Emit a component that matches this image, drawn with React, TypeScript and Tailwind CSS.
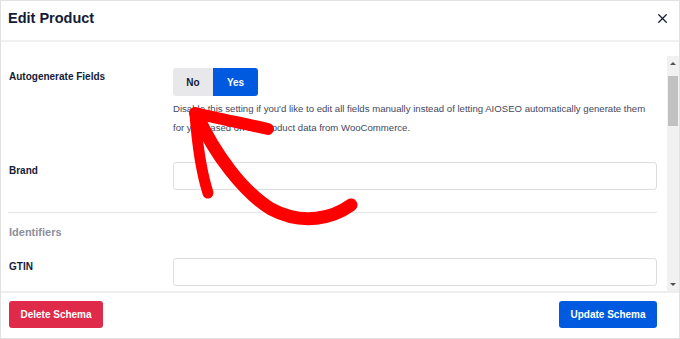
import { X } from "lucide-react";

function Field({ label, children }: { label: string; children: React.ReactNode }) {
  return (
    <div className="flex">
      <div className="w-[164px] shrink-0 pt-[1px] text-[10px] font-bold text-[#141b38]">{label}</div>
      <div className="flex-1">{children}</div>
    </div>
  );
}

function Scrollbar() {
  return (
    <div className="mt-[14px] flex w-[12px] flex-col bg-[#f1f1f1]">
      <div className="flex h-[14px] items-center justify-center">
        <div className="h-0 w-0 border-x-[3px] border-b-[3px] border-x-transparent border-b-[#505050]" />
      </div>
      <div className="mx-[1px] mt-[6px] h-[50px] bg-[#c1c1c1]" />
      <div className="flex-1" />
      <div className="flex h-[14px] items-center justify-center">
        <div className="h-0 w-0 border-x-[3px] border-t-[3px] border-x-transparent border-t-[#505050]" />
      </div>
    </div>
  );
}

export default function App() {
  return (
    <div
      className="relative flex h-[339px] w-[680px] flex-col overflow-hidden border border-[#e2e2e2] bg-white"
      style={{ fontFamily: '"Liberation Sans", Arial, sans-serif' }}
    >
      <div className="flex h-[41px] shrink-0 items-center justify-between border-b-2 border-[#f0f0f0] pb-[4px] pl-[7px] pr-[9px]">
        <h1 className="text-[14.5px] font-bold text-[#141b38]">Edit Product</h1>
        <X className="h-[15px] w-[15px] text-[#141b38]" strokeWidth={2} />
      </div>

      <div className="flex h-[251px] shrink-0 border-b-2 border-[#eeeeee]">
        <div className="flex-1 overflow-hidden pl-[8px] pr-[10px] pt-[26px]">
          <Field label="Autogenerate Fields">
            <div className="flex h-[28px] w-[85px] overflow-hidden rounded-[3px] text-[10px] font-bold">
              <div className="flex w-[40px] items-center justify-center bg-[#e8e8eb] text-[#141b38]">No</div>
              <div className="flex flex-1 items-center justify-center bg-[#005ae0] text-white">Yes</div>
            </div>
            <p className="mt-[3px] text-[9.6px] leading-[19px] text-[#434960]">
              Disable this setting if you'd like to edit all fields manually instead of letting AIOSEO automatically generate them
              <br />
              for you based on the product data from WooCommerce.
            </p>
          </Field>

          <div className="mt-[25px]">
            <Field label="Brand">
              <div className="h-[28px] rounded-[3px] border border-[#dcdde1] bg-white" />
            </Field>
          </div>

          <div className="ml-[-1px] mt-[22px] border-t border-[#e5e6ea]" />

          <div className="mt-[11px] text-[11px] font-bold text-[#8c8f9a]">Identifiers</div>

          <div className="mt-[17px]">
            <Field label="GTIN">
              <div className="h-[28px] rounded-[3px] border border-[#dcdde1] bg-white" />
            </Field>
          </div>
        </div>
        <Scrollbar />
      </div>

      <div className="flex flex-1 items-start justify-between pl-[8px] pr-[22px] pt-[8px]">
        <button className="h-[27px] w-[94px] rounded-[3px] bg-[#df2a4a] text-[10px] font-bold text-white">
          Delete Schema
        </button>
        <button className="h-[27px] w-[98px] rounded-[3px] bg-[#005ae0] text-[10px] font-bold text-white">
          Update Schema
        </button>
      </div>

      <svg
        className="pointer-events-none absolute left-0 top-0"
        width="680"
        height="339"
        viewBox="0 0 680 339"
        fill="none"
      >
        <g stroke="#ff0000" strokeLinecap="round" strokeLinejoin="round">
          <path d="M350 204 C332 217 302 225 270 208 C242 191 213 152 196 114" strokeWidth="13" />
          <path d="M194 113 C196 140 200 170 207 192" strokeWidth="11" />
          <path d="M194 112 C215 117 240 122 267 128" strokeWidth="12" />
        </g>
      </svg>
    </div>
  );
}
